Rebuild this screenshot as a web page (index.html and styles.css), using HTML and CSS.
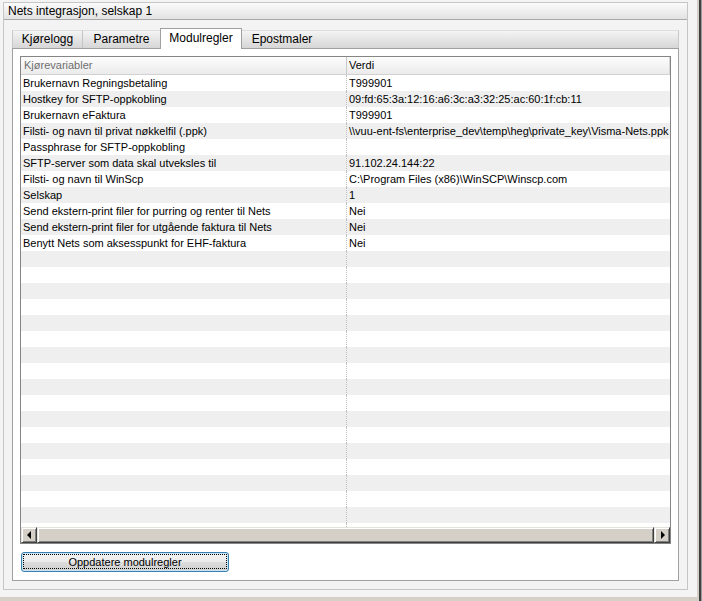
FILE: index.html
```html
<!DOCTYPE html>
<html>
<head>
<meta charset="utf-8">
<link rel="stylesheet" href="styles.css">
</head>
<body>
<div class="screen">
  <div class="main">
    <div class="frame">
      <div class="frame-title">Nets integrasjon, selskap 1</div>
      <div class="frame-body">
        <div class="tabs">
          <div class="tabstrip">
            <div class="tab tab-1">Kjørelogg</div>
            <div class="tab tab-2">Parametre</div>
            <div class="tab tab-active">Modulregler</div>
            <div class="tab tab-4">Epostmaler</div>
            <div class="tab-fill"></div>
          </div>
          <div class="panel">
            <div class="grid">
              <div class="grid-head">
                <div class="hcell hcell-name">Kjørevariabler</div>
                <div class="hcell hcell-value">Verdi</div>
              </div>
              <div class="grid-rows">
                <div class="row"><div class="cell name">Brukernavn Regningsbetaling</div><div class="cell value">T999901</div></div>
                <div class="row alt"><div class="cell name">Hostkey for SFTP-oppkobling</div><div class="cell value">09:fd:65:3a:12:16:a6:3c:a3:32:25:ac:60:1f:cb:11</div></div>
                <div class="row"><div class="cell name">Brukernavn eFaktura</div><div class="cell value">T999901</div></div>
                <div class="row alt"><div class="cell name">Filsti- og navn til privat nøkkelfil (.ppk)</div><div class="cell value">\\vuu-ent-fs\enterprise_dev\temp\heg\private_key\Visma-Nets.ppk</div></div>
                <div class="row"><div class="cell name">Passphrase for SFTP-oppkobling</div><div class="cell value"></div></div>
                <div class="row alt"><div class="cell name">SFTP-server som data skal utveksles til</div><div class="cell value">91.102.24.144:22</div></div>
                <div class="row"><div class="cell name">Filsti- og navn til WinScp</div><div class="cell value">C:\Program Files (x86)\WinSCP\Winscp.com</div></div>
                <div class="row alt"><div class="cell name">Selskap</div><div class="cell value">1</div></div>
                <div class="row"><div class="cell name">Send ekstern-print filer for purring og renter til Nets</div><div class="cell value">Nei</div></div>
                <div class="row alt"><div class="cell name">Send ekstern-print filer for utgående faktura til Nets</div><div class="cell value">Nei</div></div>
                <div class="row"><div class="cell name">Benytt Nets som aksesspunkt for EHF-faktura</div><div class="cell value">Nei</div></div>
                <div class="row alt"><div class="cell name"></div><div class="cell value"></div></div>
                <div class="row"><div class="cell name"></div><div class="cell value"></div></div>
                <div class="row alt"><div class="cell name"></div><div class="cell value"></div></div>
                <div class="row"><div class="cell name"></div><div class="cell value"></div></div>
                <div class="row alt"><div class="cell name"></div><div class="cell value"></div></div>
                <div class="row"><div class="cell name"></div><div class="cell value"></div></div>
                <div class="row alt"><div class="cell name"></div><div class="cell value"></div></div>
                <div class="row"><div class="cell name"></div><div class="cell value"></div></div>
                <div class="row alt"><div class="cell name"></div><div class="cell value"></div></div>
                <div class="row"><div class="cell name"></div><div class="cell value"></div></div>
                <div class="row alt"><div class="cell name"></div><div class="cell value"></div></div>
                <div class="row"><div class="cell name"></div><div class="cell value"></div></div>
                <div class="row alt"><div class="cell name"></div><div class="cell value"></div></div>
                <div class="row"><div class="cell name"></div><div class="cell value"></div></div>
                <div class="row alt"><div class="cell name"></div><div class="cell value"></div></div>
                <div class="row"><div class="cell name"></div><div class="cell value"></div></div>
                <div class="row alt"><div class="cell name"></div><div class="cell value"></div></div>
                <div class="row"><div class="cell name"></div><div class="cell value"></div></div>
              </div>
              <div class="hscroll">
                <div class="sbtn"><span class="arrow-left"></span></div>
                <div class="sthumb"></div>
                <div class="sbtn"><span class="arrow-right"></span></div>
              </div>
            </div>
            <button class="btn">Oppdatere modulregler</button>
          </div>
        </div>
      </div>
    </div>
  </div>
  <div class="rightbar"></div>
  <div class="bottombar"></div>
</div>
</body>
</html>
```
FILE: styles.css
```css
* { box-sizing: border-box; }
html, body { margin: 0; padding: 0; }
body {
  font-family: "Liberation Sans", Arial, sans-serif;
  font-size: 11px;
  color: #000;
  background: #f4f4f4;
}
.screen {
  width: 702px;
  height: 601px;
  display: grid;
  grid-template-columns: 697px 5px;
  grid-template-rows: 597px 4px;
  overflow: hidden;
}
.main {
  background: #f4f4f4;
  padding: 2px 0 0 3px;
}
.rightbar {
  grid-column: 2;
  grid-row: 1 / 3;
  background: #404040;
  border-left: 2px solid #d4d0c8;
  border-right: 1px solid #9a9a9a;
}
.bottombar {
  grid-column: 1;
  grid-row: 2;
  background: #d4d0c8;
}
.frame {
  width: 685px;
  height: 588px;
  border: 1px solid #c6c6c6;
  background: #f3f3f3;
  display: flex;
  flex-direction: column;
}
.frame-title {
  height: 17px;
  border-bottom: 1px solid #a9a9a9;
  background: linear-gradient(#fbfbfb, #e3e3e3);
  padding-left: 4px;
  font-size: 12px;
  line-height: 16px;
  white-space: nowrap;
}
.frame-body {
  flex: 1;
  padding: 8px;
  display: flex;
}
.tabs {
  flex: 1;
  display: flex;
  flex-direction: column;
}
.tabstrip {
  height: 20px;
  display: flex;
  align-items: flex-start;
  font-size: 12px;
}
.tab, .tab-fill {
  margin-top: 2px;
  height: 18px;
  background: linear-gradient(#f4f4f4, #d6d6d6);
  border-top: 1px solid #dedede;
  text-align: center;
  line-height: 16px;
  white-space: nowrap;
}
.tab-1 {
  width: 71px;
  border-left: 1px solid #c8c8c8;
  border-right: 1px solid #c4c4c4;
}
.tab-2 { width: 77px; }
.tab-4 { width: 80px; }
.tab-fill {
  flex: 1;
  border-right: 1px solid #c8c8c8;
}
.tab-active {
  position: relative;
  z-index: 1;
  margin-top: 0;
  width: 82px;
  height: 21px;
  border: 1px solid #a0a0a0;
  border-bottom: none;
  background: linear-gradient(#ffffff, #ffffff);
  line-height: 18px;
}
.panel {
  flex: 1;
  border: 1px solid #a0a0a0;
  background: #fff;
  padding: 7px 7px 8px 7px;
  display: flex;
  flex-direction: column;
  gap: 8px;
}
.grid {
  height: 488px;
  border: 1px solid #858585;
  display: flex;
  flex-direction: column;
  background: #fff;
}
.grid-head {
  height: 18px;
  display: grid;
  grid-template-columns: 326px 1fr;
  background: linear-gradient(#fdfdfd, #ebebeb);
  border-bottom: 1px solid #d2d2d2;
  line-height: 17px;
}
.hcell { white-space: nowrap; overflow: hidden; }
.hcell-name {
  padding-left: 3px;
  color: #6e6e6e;
  border-right: 1px solid #c9c9c9;
}
.hcell-value {
  padding-left: 2px;
  border-right: 1px solid #d6d6d6;
}
.grid-rows {
  height: 452px;
  overflow: hidden;
}
.row {
  height: 16px;
  display: grid;
  grid-template-columns: 326px 1fr;
  line-height: 16px;
}
.row.alt { background: #efefef; }
.cell {
  white-space: nowrap;
  overflow: hidden;
}
.cell.name {
  padding-left: 2px;
  border-right: 1px dotted #c0c0c0;
}
.cell.value {
  padding-left: 2px;
  padding-right: 2px;
}
.hscroll {
  height: 16px;
  display: flex;
  background: #d4d0c8;
}
.sbtn, .sthumb {
  height: 16px;
  background: #d4d0c8;
  border: 1px solid;
  border-color: #e4e2dc #404040 #404040 #e4e2dc;
  box-shadow: inset 1px 1px 0 #ffffff, inset -1px -1px 0 #808080;
}
.sbtn {
  width: 16px;
  display: flex;
  align-items: center;
  justify-content: center;
}
.sthumb { flex: 1; }
.arrow-left {
  width: 0;
  height: 0;
  border-top: 4px solid transparent;
  border-bottom: 4px solid transparent;
  border-right: 4px solid #000;
  margin-left: -1px;
}
.arrow-right {
  width: 0;
  height: 0;
  border-top: 4px solid transparent;
  border-bottom: 4px solid transparent;
  border-left: 4px solid #000;
  margin-left: 1px;
}
.btn {
  position: relative;
  width: 208px;
  height: 20px;
  margin: 0 0 0 1px;
  padding: 0;
  border: 1px solid #3c7fb1;
  border-radius: 3px;
  background: linear-gradient(#f2f2f2 0%, #ebebeb 50%, #dddddd 51%, #cfcfcf 100%);
  box-shadow: inset 0 0 0 1px #c4e5f6;
  font-family: "Liberation Sans", Arial, sans-serif;
  font-size: 11px;
  color: #000;
  line-height: 16px;
}
.btn::after {
  content: "";
  position: absolute;
  left: 1px;
  right: 1px;
  top: 1px;
  bottom: 2px;
  border: 1px dotted #000;
}
```
